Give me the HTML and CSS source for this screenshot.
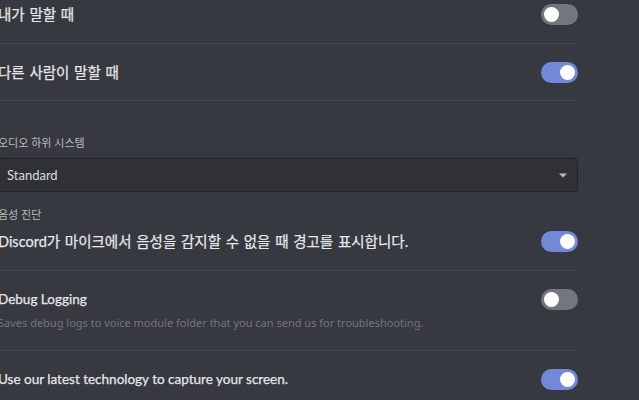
FILE: index.html
```html
<!DOCTYPE html>
<html lang="ko">
<head>
    <meta charset="UTF-8">
    <meta name="viewport" content="width=device-width, initial-scale=1.0">
    <title>음성 설정</title>
    <link rel="stylesheet" href="styles.css">
</head>
<body>
    <div class="settings">
        <div class="row first">
            <div class="row-title ko">내가 말할 때</div>
            <div class="toggle"></div>
        </div>
        <div class="row">
            <div class="row-title ko">다른 사람이 말할 때</div>
            <div class="toggle on"></div>
        </div>

        <div class="section">
            <div class="label">오디오 하위 시스템</div>
            <div class="select">
                <span>Standard</span>
                <svg class="arrow" width="10" height="10" viewBox="0 0 10 10">
                    <path d="M1 3.5 H9 L5 7.5 Z" fill="#b9bbbe"/>
                </svg>
            </div>
        </div>

        <div class="label">음성 진단</div>
        <div class="row tight">
            <div class="row-title ko">Discord가 마이크에서 음성을 감지할 수 없을 때 경고를 표시합니다.</div>
            <div class="toggle on"></div>
        </div>

        <div class="row debug">
            <div class="row-body">
                <div class="row-title">Debug Logging</div>
                <div class="row-desc">Saves debug logs to voice module folder that you can send us for troubleshooting.</div>
            </div>
            <div class="toggle"></div>
        </div>

        <div class="row">
            <div class="row-title">Use our latest technology to capture your screen.</div>
            <div class="toggle on"></div>
        </div>
    </div>
</body>
</html>
```

FILE: styles.css
```css
body {
    margin: 0;
    background-color: #36393f;
    font-family: "Noto Sans", "Noto Sans CJK KR", sans-serif;
    color: #dcddde;
    overflow: hidden;
}

.settings {
    width: 580px;
    margin-left: -2px;
}

.row {
    display: flex;
    align-items: flex-start;
    justify-content: space-between;
    padding: 18px 0 17px;
    border-bottom: 1px solid #42454a;
}

.row.first {
    margin-top: -14px;
    padding-bottom: 18px;
}

.row.tight {
    padding-top: 9px;
    padding-bottom: 18px;
}

.row.debug {
    padding-bottom: 20px;
}

.row-title {
    font-family: Lato, "Noto Sans CJK KR", sans-serif;
    font-size: 13.5px;
    line-height: 21px;
    font-weight: 400;
    color: #e6e7e8;
    -webkit-text-stroke: 0.25px #e6e7e8;
}

.row-title.ko {
    font-size: 14.5px;
    word-spacing: 1px;
}

.row-desc {
    margin-top: 6px;
    font-size: 11px;
    line-height: 14px;
    color: #72767d;
}

.toggle {
    position: relative;
    flex: none;
    width: 37px;
    height: 21px;
    border-radius: 11px;
    background-color: #72767d;
}

.toggle::after {
    content: "";
    position: absolute;
    top: 3px;
    left: 3px;
    width: 15px;
    height: 15px;
    border-radius: 50%;
    background-color: #fff;
}

.toggle.on {
    background-color: #7289da;
}

.toggle.on::after {
    left: 19px;
}

.section {
    margin-top: 35px;
    margin-bottom: 16px;
}

.label {
    font-size: 11px;
    line-height: 14px;
    color: #b9bbbe;
}

.section .label {
    margin-bottom: 8px;
}

.select {
    display: flex;
    align-items: center;
    justify-content: space-between;
    height: 32px;
    padding: 0 9px 0 8px;
    background-color: #2f3136;
    border: 1px solid #232428;
    border-radius: 3px;
    font-family: Lato, sans-serif;
    font-size: 13px;
}

.arrow {
    display: block;
}
```
